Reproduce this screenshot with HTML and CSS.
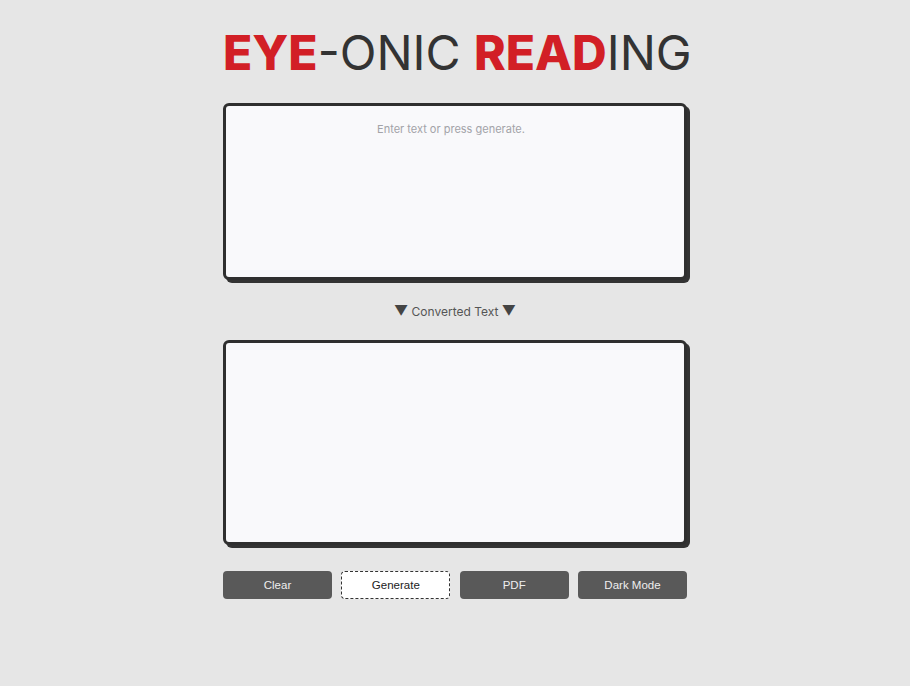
FILE: index.html
```html
<!DOCTYPE html>
<html>
<head>
<meta charset="utf-8">
<link rel="stylesheet" href="styles.css">
</head>
<body>
<main class="app">
  <h1 class="title"><span class="red">EYE</span>-ONIC <span class="red">READ</span>ING</h1>
  <textarea class="box box-input" placeholder="Enter text or press generate."></textarea>
  <div class="label"><span class="tri">▼</span> Converted Text <span class="tri">▼</span></div>
  <div class="box box-output"></div>
  <div class="buttons">
    <button class="btn">Clear</button>
    <button class="btn btn-active">Generate</button>
    <button class="btn">PDF</button>
    <button class="btn">Dark Mode</button>
  </div>
</main>
</body>
</html>
```
FILE: styles.css
```css
html, body {
  margin: 0;
  padding: 0;
  background: #e6e6e6;
}
body {
  font-family: Inter, "Liberation Sans", sans-serif;
}
.app {
  width: 464px;
  margin: 0 auto;
  padding-top: 29px;
  display: flex;
  flex-direction: column;
}
.title {
  margin: 0;
  font-size: 48px;
  line-height: 48px;
  font-weight: 400;
  color: #333;
  text-align: center;
  letter-spacing: 0;
  white-space: nowrap;
}
.red {
  color: #d21f26;
  font-weight: 800;
}
.box {
  box-sizing: border-box;
  width: 464px;
  border: 3px solid #2f2f2f;
  border-radius: 6px;
  background: #f9f9fb;
  box-shadow: 3px 3px 0 #333;
}
.box-input {
  display: block;
  margin-top: 26px;
  height: 177px;
  resize: none;
  font-family: Inter, sans-serif;
  font-size: 11px;
  text-align: center;
  padding: 16px 18px 16px 10px;
  outline: none;
}
.box-input::placeholder {
  color: #a3a3a8;
}
.label {
  margin-top: 21px;
  height: 20px;
  line-height: 20px;
  text-align: center;
  font-size: 12px;
  color: #555;
}
.tri {
  font-size: 14px;
  color: #444;
}
.box-output {
  margin-top: 19px;
  height: 205px;
}
.buttons {
  margin-top: 26px;
  display: grid;
  grid-template-columns: repeat(4, 1fr);
  gap: 9.33px;
}
.btn {
  box-sizing: border-box;
  height: 28px;
  border: none;
  border-radius: 4px;
  background: #595959;
  color: #eeeeee;
  font-family: "Liberation Sans", Arial, sans-serif;
  font-size: 11.5px;
  padding: 0;
}
.btn-active {
  background: #fff;
  color: #222;
  border: 1px dashed #333;
}
```
